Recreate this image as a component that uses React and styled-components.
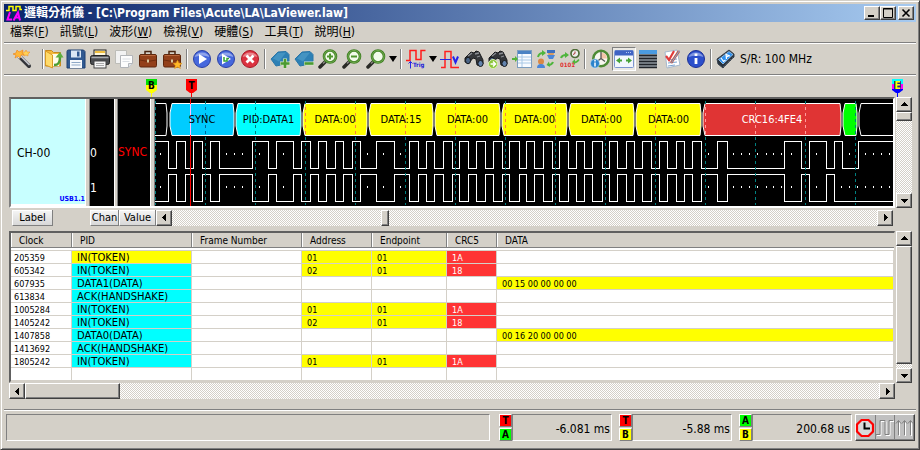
import React from 'react'
import styled, { createGlobalStyle, css } from 'styled-components'

const face = '#d4d0c8'

const raised = css`
    background: ${face};
    border: 1px solid;
    border-color: #fff #404040 #404040 #fff;
    box-shadow: inset -1px -1px 0 #808080;
`

const data = {
    menu: [['檔案', 'F'], ['訊號', 'L'], ['波形', 'W'], ['檢視', 'V'], ['硬體', 'S'], ['工具', 'T'], ['說明', 'H']],
    columns: [
        { name: 'Clock', width: 61 },
        { name: 'PID', width: 120 },
        { name: 'Frame Number', width: 110 },
        { name: 'Address', width: 70 },
        { name: 'Endpoint', width: 75 },
        { name: 'CRC5', width: 50 },
        { name: 'DATA' },
    ],
    rows: [
        ['205359', 'IN(TOKEN)', '', '01', '01', '1A', ''],
        ['605342', 'IN(TOKEN)', '', '02', '01', '18', ''],
        ['607935', 'DATA1(DATA)', '', '', '', '', '00 15 00 00 00 00'],
        ['613834', 'ACK(HANDSHAKE)', '', '', '', '', ''],
        ['1005284', 'IN(TOKEN)', '', '01', '01', '1A', ''],
        ['1405242', 'IN(TOKEN)', '', '02', '01', '18', ''],
        ['1407858', 'DATA0(DATA)', '', '', '', '', '00 16 20 00 00 00'],
        ['1413692', 'ACK(HANDSHAKE)', '', '', '', '', ''],
        ['1805242', 'IN(TOKEN)', '', '01', '01', '1A', ''],
        ['', '', '', '', '', '', ''],
    ],
    readouts: [
        { from: 'T', to: 'A', value: '-6.081 ms' },
        { from: 'T', to: 'B', value: '-5.88 ms' },
        { from: 'A', to: 'B', value: '200.68 us' },
    ],
}

const chipColors = { T: '#ff0000', A: '#00ff00', B: '#ffff00' }

// x of every level change
const edges = [
    13, 21, 30, 38, 47, 55, 64, 97, 113, 121, 138, 146, 155, 163, 171, 180, 188, 197, 205, 221, 239, 254, 263, 271,
    279, 288, 297, 304, 313, 321, 330, 338, 347, 354, 364, 371, 379, 388, 397, 404, 413, 421, 429, 437, 447, 454,
    462, 471, 479, 487, 496, 504, 512, 521, 529, 537, 546, 562, 572, 629, 646, 654, 671, 679,
]
const dots = [6, 72, 80, 88, 105, 129, 213, 229, 246, 554, 579, 587, 595, 603, 612, 619, 627, 637, 662, 695, 711, 719, 727, 735]

const packets = [
    { x: -20, end: 13, fill: '#000' },
    { x: 14, end: 80, fill: '#00ccff', text: 'SYNC' },
    { x: 80, end: 147, fill: '#00ffff', text: 'PID:DATA1' },
    { x: 147, end: 213, fill: '#ffff00', text: 'DATA:00' },
    { x: 213, end: 279, fill: '#ffff00', text: 'DATA:15' },
    { x: 279, end: 346, fill: '#ffff00', text: 'DATA:00' },
    { x: 346, end: 413, fill: '#ffff00', text: 'DATA:00' },
    { x: 413, end: 480, fill: '#ffff00', text: 'DATA:00' },
    { x: 480, end: 547, fill: '#ffff00', text: 'DATA:00' },
    { x: 547, end: 687, fill: '#e03434', text: 'CRC16:4FE4', color: '#fff' },
    { x: 687, end: 703, fill: '#00ff00' },
    { x: 703, end: 2400, fill: '#000' },
]

const wavePath = (list, startHigh, top, low) => {
    let high = startHigh
    let d = `M-2 ${high ? top : low}`
    list.forEach((x) => {
        high = !high
        d += `H${x}V${high ? top : low}`
    })
    return d + 'H2400'
}

let TinyText = styled.text`
    font: bold 6px "DejaVu Sans Condensed", sans-serif;
`

let Wave = () =>
    <WaveSvg role="img" aria-label="CH-00 USB1.1">
        {packets.map((p) =>
            <path
                key={p.x}
                d={`M${p.x + 3} 4.5H${p.end - 2}L${p.end - 1} 14V27L${p.end - 2} 36.5H${p.x + 3}L${p.x + 1} 27V14Z`}
                fill={p.fill}
                stroke="#fff"
            />
        )}
        <g fill="none" stroke="#fff" shapeRendering="crispEdges">
            <path d={wavePath([...edges, 687, 703], true, 42.5, 69.5)} />
            <path d={wavePath(edges, false, 75.5, 102.5)} />
        </g>
        <g fill="#fff">
            {dots.map((x) => <rect key={x} x={x - 1} y="54" width="1" height="2" />)}
            {[...dots, 687, 703].map((x) => <rect key={x} x={x - 1} y="87" width="1" height="2" />)}
        </g>
        {Array.from({ length: 40 }, (_, i) => i * 50).map((x) => {
            const p = packets.find((k) => x >= k.x && x < k.end)
            const over = p && { '#ffff00': '#ff8040', '#e03434': '#ff9c9c', '#00ccff': '#00669a' }[p.fill]
            return (
                <g key={x} strokeDasharray="3 3" shapeRendering="crispEdges">
                    <path d={`M${x + 0.5} 2V106`} stroke="#008080" />
                    {over && <path d={`M${x + 0.5} 8V36`} stroke={over} />}
                </g>
            )
        })}
        <path d="M35.5 0V107" stroke="#f00" shapeRendering="crispEdges" />
        <path d="M35.5 5V36" stroke="#ffc0ff" shapeRendering="crispEdges" />
        {packets.filter((p) => p.text).map((p) =>
            <PacketText key={p.x} x={(p.x + p.end) / 2} y="24" fill={p.color || '#000'}>{p.text}</PacketText>
        )}
    </WaveSvg>

/* toolbar drawings, all on a 20 x 20 grid */

let Svg = ({ children, size = 20, ...rest }) =>
    <svg width={size} height={size} viewBox={`0 0 ${size} ${size}`} aria-hidden="true" {...rest}>{children}</svg>

let Briefcase = ({ star }) =>
    <Svg>
        <path d="M7 6V2.500h6V6" fill="none" stroke="#4a2410" strokeWidth="1.500" />
        <rect x="1.500" y="5.500" width="17" height="12.500" rx="1.500" fill="#93401a" stroke="#5f260c" />
        <path d="M2 11q8 3 16 0" fill="none" stroke="#6e2c0e" />
        <path d="M2.500 6.500h15" stroke="#b9673c" />
        <rect x="9" y="10.500" width="2" height="3" fill="#d8c9a0" />
        {star && <path d="M15.500 11l1.400 3 3.100.3-2.300 2.100.7 3.200-2.900-1.700-2.900 1.700.7-3.200-2.300-2.100 3.100-.3z" fill="#ffb828" stroke="#d98a10" strokeWidth=".5" />}
    </Svg>

let Orb = ({ color, dark, children }) =>
    <Svg>
        <circle cx="10" cy="10" r="8.500" fill={color} stroke={dark} />
        <path d="M2.500 8a8 7 0 0 1 15 0q-7-3-15 0z" fill="#fff" opacity=".4" />
        {children}
    </Svg>

let Tag = ({ minus }) =>
    <Svg>
        <path d="M1 10l7-7 8-.5 3 3v7l-8 3.500-5 1z" fill="#2d80b5" stroke="#2a76a8" />
        <path d="M8 4l8-.5-7 9-6-3z" fill="#5aa5d0" opacity=".5" />
        <path d={minus ? 'M10 14.500h10' : 'M10 14.500h10M15 9.500v10'} stroke="#d8e8cc" strokeWidth="4" />
        <path d={minus ? 'M10.500 14.500h9' : 'M10.500 14.500h9M15 10v9'} stroke="#4b9a32" strokeWidth="2.600" />
    </Svg>

let Lens = ({ sign }) =>
    <Svg>
        <path d="M2 18l5.500-5.500" stroke="#2a2a26" strokeWidth="3.500" strokeLinecap="round" />
        <path d="M5 14.500l2-2" stroke="#8a8a80" strokeWidth="1.500" />
        <circle cx="12" cy="7.500" r="6" fill="#f2fbea" stroke="#3f7f22" strokeWidth="2.600" />
        <circle cx="12" cy="7.500" r="6" fill="none" stroke="#7db85c" strokeWidth=".8" />
        {sign && <path d={sign} stroke="#4f962f" strokeWidth="2" />}
    </Svg>

let Bino = ({ next }) =>
    <Svg>
        <path d="M1 9l6-6 3 1 2-2 3 1 4 8v4l-3 2-3-1-1-6-3-1-4 5-4-1z" fill="#34363a" stroke="#1a1b1e" />
        <path d="M4 7l4-3M11 5l4-1M13 8l3-1" stroke="#8b8e94" strokeWidth="1.300" />
        <ellipse cx="4" cy="11.500" rx="2.500" ry="3.300" fill="#4b6485" stroke="#15171a" />
        <ellipse cx="16.500" cy="14.500" rx="2.600" ry="3" fill="#6383ad" stroke="#15171a" />
        {next && <>
            <circle cx="5" cy="15" r="4.500" fill="#8cc63a" stroke="#d9efb5" />
            <path d="M2.500 15h4M5 12.500L7.500 15 5 17.500" fill="none" stroke="#fff" strokeWidth="1.500" />
        </>}
    </Svg>

const icons = {
    wand: <Svg>
        <path d="M7 7l10 10" stroke="#33353a" strokeWidth="4" strokeLinecap="round" />
        <path d="M8 6.500l9.500 9.500" stroke="#c8cad0" strokeWidth="1.600" />
        <path d="M5.500 5.500l3 3" stroke="#f4f4f4" strokeWidth="3.500" />
        <path d="M1 5l3-1 1-3 2 2 4-2-1 3 2 2-3 0-1 3-2-2-3 2 1-3z" fill="#ffb93a" stroke="#f08a1c" strokeWidth=".7" />
        <path d="M14 1l1 2 3 0-2 2 0 2-2-1-2 1 0-2-2-2 3 0z" fill="#ffd257" stroke="#f08a1c" strokeWidth=".5" />
    </Svg>,
    open: <Svg>
        <path d="M1.500 1.500h6l2 2h7V17H1.500z" fill="#f5b93c" stroke="#c98a1e" />
        <path d="M5 5h10v12H5z" fill="#fffbe9" />
        <path d="M1.500 2l7 4v13l-7-3z" fill="#ffdb6b" stroke="#d99b24" />
        <path d="M10 16c5 0 6-3 6-8" fill="none" stroke="#4d9e33" strokeWidth="2.500" />
        <path d="M11.500 8.500L16 3l3.500 5.500z" fill="#5eae3f" />
    </Svg>,
    save: <Svg>
        <path d="M1 2.500Q1 1 2.500 1h15L19 2.500V19H1z" fill="#315a91" stroke="#1d3f70" />
        <rect x="5" y="1.500" width="10" height="7" fill="#dce9f5" />
        <rect x="11" y="2.500" width="2.500" height="5" fill="#315a91" />
        <rect x="4" y="11" width="12" height="8" fill="#f6f9fc" />
        <path d="M5.500 13.500h9M5.500 16h9" stroke="#8fa9c7" />
    </Svg>,
    print: <Svg>
        <rect x="4" y="1" width="12" height="7" fill="#fff8dc" stroke="#222" />
        <path d="M5 3h10" stroke="#f0c040" strokeWidth="2" />
        <rect x="0.500" y="6.500" width="19" height="9" rx="2" fill="#4b4d50" stroke="#222" />
        <path d="M1.500 8.500h17" stroke="#a8abae" strokeWidth="1.500" />
        <rect x="4" y="12" width="12" height="7" fill="#f6f6f6" stroke="#444" />
        <path d="M6 14.500h8M6 16.500h8" stroke="#aaa" />
    </Svg>,
    copy: <Svg>
        <path d="M1.500 1.500h11v13h-11z" fill="#f2f2f2" stroke="#bdbdb8" />
        <path d="M6.500 6.500h12v8l-4 4h-8z" fill="#fdfdfd" stroke="#b2b5b9" />
        <path d="M14.500 18.500v-4h4" fill="#dde2e8" stroke="#b2b5b9" />
        <path d="M8.500 10h8M8.500 12.500h7" stroke="#d9dde2" />
    </Svg>,
    run: <Orb color="#4668dd" dark="#2a3fa5"><path d="M7 5l8 5-8 5z" fill="#fff" /></Orb>,
    repeat: <Orb color="#4668dd" dark="#2a3fa5">
        <path d="M6 4.500l9 5.500-9 5.500z" fill="#fff" />
        <path d="M8 8v4h3V9.500h2" fill="none" stroke="#35a535" strokeWidth="1.500" />
    </Orb>,
    stop: <Orb color="#dc3340" dark="#a81826"><path d="M6.500 6.500l7 7M13.500 6.500l-7 7" stroke="#fff" strokeWidth="2.800" /></Orb>,
    trigger: <Svg>
        <path d="M0 11.500h4V1.500h6v9h5V1.500h4.500" fill="none" stroke="#ff1a1a" strokeWidth="1.500" />
        <path d="M4.500 19.500v-7M2.500 14.500l2-2 2 2" fill="none" stroke="#2727e8" />
        <TinyText x="7" y="18" fill="#2020d8">Trig</TinyText>
    </Svg>,
    level: <Svg>
        <path d="M1 18.500h4V2.500h6v16h8" fill="none" stroke="#ff2020" strokeWidth="1.500" />
        <path d="M0 10.500h11" stroke="#2727e8" />
        <path d="M13 7.500l2.500 6L18 7.500" fill="none" stroke="#2323ee" strokeWidth="2" />
    </Svg>,
    list: <Svg>
        <rect x="5.500" y="1.500" width="14" height="17" fill="#f8fbff" stroke="#7d9ec0" />
        <path d="M6 3.500h13" stroke="#4b83c4" strokeWidth="3" />
        <path d="M6 8h13M6 11h13M6 14h13M10 5v13" stroke="#a8c8e6" />
        <path d="M0 10h4" stroke="#54b33a" strokeWidth="2" />
        <path d="M3 7l3 3-3 3z" fill="#54b33a" />
    </Svg>,
    users: <Svg>
        <circle cx="15" cy="4" r="3" fill="#d79a62" />
        <path d="M11 1h8v3h-8z" fill="#3e70c0" />
        <path d="M11 6h8l-2 4h-4z" fill="#4b86d9" />
        <circle cx="5" cy="12.500" r="3" fill="#d98845" />
        <path d="M1 19q0-4 4-4t4 4z" fill="#4b86d9" />
        <path d="M2 8q1-4 5-4M12 16q4 0 5-3" fill="none" stroke="#4eb53c" strokeWidth="2" />
        <path d="M6 1l4 3-4 3z" fill="#4eb53c" />
        <path d="M13 12.500l-2.500 3.500 3.500 2z" fill="#4eb53c" />
    </Svg>,
    binary: <Svg>
        <circle cx="15" cy="4.500" r="4" fill="#eee" stroke="#4f6d38" strokeWidth="1.700" />
        <path d="M15 2.500v2l-2 1" fill="none" stroke="#a33" />
        <path d="M1 9q1-3 5-3" fill="none" stroke="#4eb53c" strokeWidth="2" />
        <path d="M5 3l4 3-4 3zM12 13l3-3v6z" fill="#4eb53c" />
        <path d="M14 13.500q3 0 5-3" fill="none" stroke="#4eb53c" strokeWidth="1.500" />
        <TinyText x="0" y="18" fill="#e03030">0101</TinyText>
    </Svg>,
    history: <Svg>
        <circle cx="11" cy="9.500" r="7.700" fill="#f7f7ef" stroke="#4d8b35" strokeWidth="2.600" />
        <path d="M11 9.500V3.500A6 6 0 0 1 17 9.500z" fill="#f2c5aa" />
        <path d="M11 3v6.500l4 3M11 9.500l-4 3" fill="none" stroke="#555" strokeWidth="1.300" />
        <circle cx="5" cy="14.500" r="4.500" fill="#2a83cc" stroke="#c7dff2" strokeWidth=".7" />
        <path d="M5 13.500v4M5 11v1.500" stroke="#fff" strokeWidth="1.500" />
    </Svg>,
    fit: <Svg>
        <rect x="0.500" y="1.500" width="19" height="17" rx="1" fill="#f2f6fd" stroke="#7b95cf" />
        <path d="M1 4h18" stroke="#3f62c4" strokeWidth="5" />
        <path d="M12 3.500h6" stroke="#b7c8f2" strokeDasharray="1 1" />
        <path d="M2 11.500l4-3v2h2v2H6v2zM18 11.500l-4-3v2h-2v2h2v2z" fill="#47a238" />
    </Svg>,
    lines: <Svg>
        <rect x="1" y="1" width="18" height="18" fill="#8c949c" />
        <path d="M1 3h18" stroke="#4b9be0" strokeWidth="4" />
        <path d="M1 6.500h18M1 9.500h18M1 12.500h18M1 15.500h18M1 18.500h18" stroke="#20242a" strokeWidth="1.700" />
    </Svg>,
    edit: <Svg>
        <path d="M3 3l12-2 3 15-13 3z" fill="#fff" stroke="#a5b8cc" />
        <path d="M6 11l9-1M6 14l9-1M6 17l7-1" stroke="#7ba3d0" />
        <path d="M4 7l3 4 5-9" fill="none" stroke="#e03b3b" strokeWidth="2.200" />
        <path d="M17 2l-8 12" stroke="#c05a48" strokeWidth="2.600" />
        <path d="M17.500 1.500l-8 12" stroke="#7aa5d8" />
    </Svg>,
    info: <Orb color="#2c4fcb" dark="#1c2f96"><path d="M10 9v6M10 4.500v2.500" stroke="#fff" strokeWidth="2.800" /></Orb>,
    device: <Svg>
        <path d="M1 10L13 1l5 4v3L7 19l-5-4z" fill="#26313d" stroke="#39434e" />
        <path d="M2.500 10.500L13 2.500l4 3L7 15z" fill="#2e90ee" stroke="#b8dcff" strokeWidth=".7" />
        <path d="M5 9l2.500 3.500 2-1.500M10.500 10l-.5-4.500 4 1.500M10.500 8l2-1" fill="none" stroke="#fff" strokeWidth="1.200" />
        <path d="M8 17.500l9-9" stroke="#c5ccd4" strokeDasharray="1 2" />
    </Svg>,
}

let Arrow = ({ dir }) =>
    <svg width="7" height="7" viewBox="0 0 7 7" aria-hidden="true" shapeRendering="crispEdges">
        <path d={{ up: 'M0 5L3.500 1 7 5z', down: 'M0 2h7L3.500 6z', left: 'M5 0L1 3.500 5 7z', right: 'M2 0l4 3.500L2 7z' }[dir]} />
    </svg>

let Marker = ({ name, top, bottom, color }) =>
    <svg width="11" height="18" viewBox="0 0 11 18">
        <path d="M0 0h11v6H0z" fill={top} />
        <path d="M0 6h11v5l-4 3H6v4H5v-4H4l-4-3z" fill={bottom} />
        {name === 'E' && <>
            <path d="M0 5h11v5H0z" fill="#f0f" />
            <path d="M2 2h7v8H2z" fill="#203078" />
        </>}
        <MarkerText x="5.500" y="10" fill={color}>{name}</MarkerText>
    </svg>

let Tool = ({ icon, label, ...rest }) => <ToolButton aria-label={label} {...rest}>{icons[icon] || icon}</ToolButton>

let Drop = ({ label }) =>
    <DropButton aria-label={label}>
        <svg width="8" height="6" viewBox="0 0 8 6" aria-hidden="true"><path d="M0 0h8L4 6z" /></svg>
    </DropButton>

let Toolbar = () =>
    <ToolRow>
        <Tool icon="wand" label="精靈" />
        <Divider $first />
        <Tool icon="open" label="開啟" $narrow />
        <Tool icon="save" label="儲存" />
        <Tool icon="print" label="列印" />
        <Tool icon="copy" label="複製" />
        <Tool icon={<Briefcase />} label="工作" />
        <Tool icon={<Briefcase star />} label="新工作" />
        <Divider />
        <Tool icon="run" label="執行" />
        <Tool icon="repeat" label="重複執行" />
        <Tool icon="stop" label="停止" />
        <Divider />
        <Tool icon={<Tag />} label="新增標籤" />
        <Tool icon={<Tag minus />} label="移除標籤" />
        <Tool icon={<Lens sign="M9 7.500h6M12 4.500v6" />} label="放大" />
        <Tool icon={<Lens sign="M9 7.500h6" />} label="縮小" />
        <Tool icon={<Lens />} label="縮放" />
        <Drop label="縮放選項" />
        <Divider />
        <Tool icon="trigger" label="觸發" />
        <Drop label="觸發選項" />
        <Tool icon="level" label="準位" />
        <Tool icon={<Bino />} label="尋找" />
        <Tool icon={<Bino next />} label="找下一個" />
        <Tool icon="list" label="列表" />
        <Tool icon="users" label="交換" />
        <Tool icon="binary" label="資料" />
        <Divider />
        <Tool icon="history" label="時間" />
        <Tool icon="fit" label="視窗" $pressed />
        <Tool icon="lines" label="線條" />
        <Tool icon="edit" label="設定" />
        <Tool icon="info" label="資訊" />
        <Divider />
        <Tool icon="device" label="裝置" />
        <Rate>S/R: 100 MHz</Rate>
    </ToolRow>

let HScroll = ({ before, thumb }) =>
    <HTrack>
        <ScrollButton aria-label="left"><Arrow dir="left" /></ScrollButton>
        <Gap $grow={before} />
        <HThumb $size={thumb} />
        <Gap $grow={100 - before} />
        <ScrollButton aria-label="right"><Arrow dir="right" /></ScrollButton>
    </HTrack>

let VScroll = ({ thumb }) =>
    <VTrack>
        <ScrollButton aria-label="up"><Arrow dir="up" /></ScrollButton>
        <VThumb $size={thumb} />
        <Gap $grow={1} />
        <ScrollButton aria-label="down"><Arrow dir="down" /></ScrollButton>
    </VTrack>

const cellColor = (col, text, row) => {
    if (!text || col === 0) return '#fff'
    if (col === 1) return row === 0 ? '#ffff00' : '#00ffff'
    return col === 5 ? '#ff3434' : '#ffff00'
}

let PacketTable = () =>
    <Table>
        <colgroup>
            {data.columns.map((c) => <col key={c.name} width={c.width} />)}
        </colgroup>
        <thead>
            <tr>{data.columns.map((c) => <Th key={c.name} scope="col"><HeadText>{c.name}</HeadText></Th>)}</tr>
        </thead>
        <tbody>
            {data.rows.map((row, r) =>
                <tr key={r}>
                    {row.map((text, i) =>
                        <Td key={i} $fill={cellColor(i, text, r)} $light={i === 5} $first={i === 0} $wide={i === 1}>{text}</Td>
                    )}
                </tr>
            )}
        </tbody>
    </Table>

let App = () =>
    <Window>
        <Global />
        <TitleBar>
            <Svg size={16}>
                <path d="M0 5.500h3v-4h4v4h3v-4h4v3h2" fill="none" stroke="#ff0" strokeWidth="1.500" />
                <path d="M4 7L1.500 14.500H6M7.500 15.500L12 7.500l2 8M9 12.500h5" fill="none" stroke="#f0f" strokeWidth="2" />
            </Svg>
            <Title>邏輯分析儀 - [C:\Program Files\Acute\LA\LaViewer.law]</Title>
            <CaptionButton aria-label="minimize"><Svg size={10}><path d="M1 8h6" stroke="#000" strokeWidth="2" /></Svg></CaptionButton>
            <CaptionButton aria-label="maximize"><Svg size={10}><path d="M.5 9.500v-9h9v9zM0 1h10" fill="none" stroke="#000" /></Svg></CaptionButton>
            <CaptionButton aria-label="close" $apart><Svg size={10}><path d="M1.500 1.500l7 7M8.500 1.500l-7 7" stroke="#000" strokeWidth="1.600" /></Svg></CaptionButton>
        </TitleBar>
        <MenuBar>
            {data.menu.map(([name, key]) => <MenuItem key={key}>{name}(<u>{key}</u>)</MenuItem>)}
        </MenuBar>
        <Toolbar />
        <Work>
            <Markers>
                <Flag $left={137}><Marker name="B" top="#00e000" bottom="#ffff00" color="#000" /></Flag>
                <Flag $left={177}><Marker name="T" top="#ff0000" bottom="#ff0000" color="#000" /></Flag>
                <Flag $right={9}><Marker name="E" top="#00ffff" bottom="#0000ff" color="#ffff00" /></Flag>
            </Markers>
            <Split>
                <Scope>
                    <ChannelLabel>CH-00<Protocol>USB1.1</Protocol></ChannelLabel>
                    <Splitter />
                    <Channels><span>0</span><span>1</span></Channels>
                    <Splitter $thin />
                    <ValueCell>SYNC</ValueCell>
                    <Splitter />
                    <Wave />
                </Scope>
                <VScroll thumb={9} />
            </Split>
            <ScopeFooter>
                <LabelSlot><ColumnButton>Label</ColumnButton></LabelSlot>
                <ColumnButton $size={28}>Chan</ColumnButton>
                <ColumnButton $size={36}>Value</ColumnButton>
                <HScroll before={30} thumb={8} />
            </ScopeFooter>
            <Split>
                <Stack>
                    <TableBox><PacketTable /></TableBox>
                </Stack>
                <VScroll thumb={118} />
            </Split>
            <TableFooter><HScroll before={0} thumb={95} /></TableFooter>
        </Work>
        <StatusBar>
            <Message />
            {data.readouts.map((r) =>
                <Readout key={r.value}>
                    <Chips>
                        <Chip $color={chipColors[r.from]}>{r.from}</Chip>
                        <Chip $color={chipColors[r.to]}>{r.to}</Chip>
                    </Chips>
                    <Reading>{r.value}</Reading>
                </Readout>
            )}
            <Modes>
                <ModeButton aria-label="clock">
                    <Svg>
                        <path d="M6.500 2h7L18 6.500v7L13.500 18h-7L2 13.500v-7z" fill="#d8d8d8" stroke="#f00" strokeWidth="2.200" />
                        <path d="M9.500 4.500v6H15" fill="none" stroke="#000" strokeWidth="2" />
                    </Svg>
                </ModeButton>
                <ModeButton aria-label="pulse">
                    <Svg>
                        <path d="M2 17.500h4v-14h5v14h4v-14h4" fill="none" stroke="#fff" />
                        <path d="M1 16.500h4v-14h5v14h4v-14h4" fill="none" stroke="#808080" />
                    </Svg>
                </ModeButton>
                <ModeButton aria-label="edges">
                    <Svg>
                        <path d="M4.500 18V4M10.500 18V4M16.500 18V4" stroke="#fff" />
                        <path d="M3.500 17V3M9.500 17V3M15.500 17V3M1 5.500l2.500-3L6 5.500M7 5.500l2.500-3 2.500 3M13 5.500l2.500-3 2.500 3" fill="none" stroke="#808080" />
                    </Svg>
                </ModeButton>
            </Modes>
        </StatusBar>
    </Window>

export default App

const Global = createGlobalStyle`
    * { box-sizing: border-box; }
    body {
        margin: 0;
        background: ${face};
        font-family: "DejaVu Sans Condensed", "Noto Sans", "Noto Sans CJK TC", sans-serif;
        font-size: 12px;
        color: #000;
    }
    button {
        font: inherit;
        color: inherit;
        padding: 0;
        border: 0;
        background: none;
        display: flex;
        align-items: center;
        justify-content: center;
        flex-shrink: 0;
    }
    svg { display: block; flex-shrink: 0; }
`

const Window = styled.div`
    display: flex;
    flex-direction: column;
    min-height: 100vh;
    padding: 2px;
    border: 1px solid;
    border-color: ${face} #404040 #404040 ${face};
    box-shadow: inset 1px 1px 0 #fff, inset -1px -1px 0 #808080;
`

const TitleBar = styled.header`
    display: flex;
    align-items: center;
    height: 18px;
    margin: 1px 1px 0;
    padding: 0 2px;
    background: linear-gradient(90deg, #0a246a, #a6caf0);
    color: #fff;
`

const Title = styled.h1`
    flex: 1;
    margin: 0 0 0 2px;
    font-size: 12px;
    line-height: 18px;
    font-weight: bold;
    white-space: nowrap;
    overflow: hidden;
`

const CaptionButton = styled.button`
    && {
        ${raised}
        width: 16px;
        height: 14px;
        margin-left: ${(props) => (props.$apart ? '2px' : '0')};
    }
`

const MenuBar = styled.nav`
    display: flex;
    gap: 1px;
    height: 21px;
    margin: 0 1px;
    padding-left: 1px;
    border-bottom: 1px solid #808080;
`

const MenuItem = styled.button`
    && {
        padding: 0 5px;
        line-height: 20px;
        white-space: nowrap;
    }
`

const ToolRow = styled.div`
    display: flex;
    align-items: center;
    height: 32px;
    margin: 0 1px;
    padding: 0 6px;
    border-top: 1px solid #fff;
    border-bottom: 1px solid #808080;
    box-shadow: 0 1px 0 #fff;
`

const ToolButton = styled.button`
    && {
        width: ${(props) => (props.$narrow ? '20px' : '24px')};
        height: 24px;
        ${(props) => props.$pressed && css`
            border: 1px solid;
            border-color: #808080 #fff #fff #808080;
            background: #eae8e3;
        `}
    }
`

const DropButton = styled.button`
    && {
        width: 10px;
        height: 24px;
    }
`

const Divider = styled.span`
    flex-shrink: 0;
    width: 2px;
    height: 20px;
    margin: ${(props) => (props.$first ? '0 0 0 8px' : '0 2px')};
    border-left: 1px solid #808080;
    border-right: 1px solid #fff;
`

const Rate = styled.span`
    margin-left: 2px;
    white-space: nowrap;
`

const MarkerText = styled.text`
    font: bold 10px "DejaVu Sans Condensed", sans-serif;
    text-anchor: middle;
`

const Work = styled.main`
    flex: 1;
    padding: 0 5px 0 6px;
`

const Markers = styled.div`
    position: relative;
    height: 22px;
`

const Flag = styled.span`
    position: absolute;
    z-index: 1;
    top: 4px;
    ${(props) => (props.$left ? `left: ${props.$left}px;` : `right: ${props.$right}px;`)}
`

const Split = styled.div`
    display: flex;
`

const Scope = styled.section`
    flex: 1;
    min-width: 0;
    display: flex;
    height: 111px;
    margin-right: 1px;
    border: 2px solid;
    border-color: #606060 #fff #fff #808080;
    background: #000;
`

const ChannelLabel = styled.div`
    width: 74px;
    flex-shrink: 0;
    display: flex;
    flex-direction: column;
    justify-content: flex-end;
    gap: 34px;
    padding-left: 6px;
    background: #c8ffff;
    border-bottom: 2px solid #fff;
    line-height: 16px;
`

const Protocol = styled.span`
    align-self: flex-end;
    font-size: 7px;
    line-height: 9px;
    font-weight: bold;
    color: #00f;
`

const Splitter = styled.span`
    flex-shrink: 0;
    width: ${(props) => (props.$thin ? '4px' : '5px')};
    background: ${face};
    border-left: 1px solid #fff;
    border-right: 1px solid #808080;
`

const Channels = styled.div`
    width: 24px;
    flex-shrink: 0;
    display: flex;
    flex-direction: column;
    justify-content: flex-end;
    gap: 19px;
    padding-bottom: 10px;
    line-height: 16px;
    color: #fff;
`

const ValueCell = styled.div`
    width: 32px;
    flex-shrink: 0;
    line-height: 107px;
    color: #f00;
    overflow: hidden;
`

const WaveSvg = styled.svg`
    flex: 1;
    min-width: 0;
    height: 107px;
`

const PacketText = styled.text`
    font-size: 11px;
    text-anchor: middle;
`

const ScopeFooter = styled.div`
    display: flex;
    align-items: center;
    height: 17px;
    margin: 1px 19px 5px 3px;
`

const LabelSlot = styled.div`
    width: 78px;
    flex-shrink: 0;
`

const ColumnButton = styled.button`
    && {
        ${raised}
        border-color: #fff #808080 #808080 #fff;
        border-right-width: 0;
        box-shadow: 1px 0 0 #808080;
        background: linear-gradient(#f4f4f4, #d8d8d8);
        width: ${(props) => (props.$size ? `${props.$size}px` : '40px')};
        height: 16px;
        margin-right: 1px;
        font-size: 11px;
        line-height: 14px;
    }
`

const track = css`
    display: flex;
    background: repeating-conic-gradient(#fff 0 25%, ${face} 0 50%) 0 0 / 2px 2px;
`

const HTrack = styled.div`
    ${track}
    flex: 1;
    min-width: 0;
    height: 16px;
`

const VTrack = styled.div`
    ${track}
    flex-direction: column;
    width: 16px;
`

const ScrollButton = styled.button`
    && {
        ${raised}
        width: 16px;
        height: 15px;
        ${HTrack} & {
            height: 16px;
        }
    }
`

const HThumb = styled.span`
    ${raised}
    flex-shrink: 0;
    width: ${(props) => props.$size}px;
`

const VThumb = styled.span`
    ${raised}
    flex-shrink: 0;
    height: ${(props) => props.$size}px;
`

const Gap = styled.span`
    flex: ${(props) => props.$grow} 0 0;
`

const Stack = styled.div`
    flex: 1;
    min-width: 0;
    margin-right: 1px;
`

const TableBox = styled.div`
    border: 2px solid;
    border-color: #606060 ${face} ${face} #606060;
    border-right-width: 1px;
    background: #fff;
    overflow: hidden;
`

const Table = styled.table`
    width: 100%;
    table-layout: fixed;
    border-collapse: separate;
    border-spacing: 0;
`

const Th = styled.th`
    height: 18px;
    padding: 0 0 4px;
    background: ${face};
    box-shadow: inset 0 -1px 0 ${face}, inset 0 -3px 0 #fff, inset 0 -4px 0 #808080;
    font-size: 10px;
    font-weight: normal;
    text-align: left;
`

const HeadText = styled.span`
    display: block;
    height: 14px;
    padding-left: 7px;
    border-left: 1px solid #fff;
    border-right: 1px solid #808080;
    line-height: 16px;
    white-space: nowrap;
    ${Th}:last-child & {
        border-right: 0;
    }
`

const Td = styled.td`
    height: 13px;
    padding: 2px 0 0 ${(props) => (props.$first ? '3px' : '5px')};
    border-right: 1px solid ${face};
    border-bottom: 1px solid ${face};
    background: ${(props) => props.$fill};
    color: ${(props) => (props.$light ? '#fff' : '#000')};
    font-family: ${(props) => (props.$wide ? '"DejaVu Sans", sans-serif' : 'inherit')};
    font-size: ${(props) => (props.$wide ? '10px' : '9px')};
    line-height: 10px;
    white-space: nowrap;
`

const TableFooter = styled.div`
    display: flex;
    margin-right: 17px;
`

const StatusBar = styled.footer`
    display: flex;
    height: 38px;
    margin: 0 1px;
    padding: 3px 1px 6px 2px;
    border-top: 1px solid #808080;
    box-shadow: inset 0 1px 0 #fff;
`

const sunken = css`
    border: 1px solid;
    border-color: #808080 #fff #fff #808080;
`

const Message = styled.div`
    ${sunken}
    flex: 1;
    margin: 1px 2px 0 0;
`

const Readout = styled.div`
    display: flex;
    width: 113px;
    margin: 1px 0 0 7px;
`

const Chips = styled.div`
    display: flex;
    flex-direction: column;
    gap: 1px;
    width: 13px;
`

const Chip = styled.span`
    flex: 1;
    border: 1px solid;
    border-color: #fff #808080 #808080 #fff;
    background: ${(props) => props.$color};
    font-size: 10px;
    line-height: 11px;
    font-weight: bold;
    text-align: center;
`

const Reading = styled.output`
    ${sunken}
    flex: 1;
    padding: 4px 1px 0 0;
    line-height: 20px;
    text-align: right;
    white-space: nowrap;
`

const Modes = styled.div`
    ${raised}
    display: flex;
    width: 60px;
    margin: 1px 0 0 3px;
    background: #c0c0c0;
`

const ModeButton = styled.button`
    && {
        flex: 1;
        min-width: 0;
        border-right: 1px solid #808080;
        &:last-child {
            border-right: 0;
        }
    }
`
